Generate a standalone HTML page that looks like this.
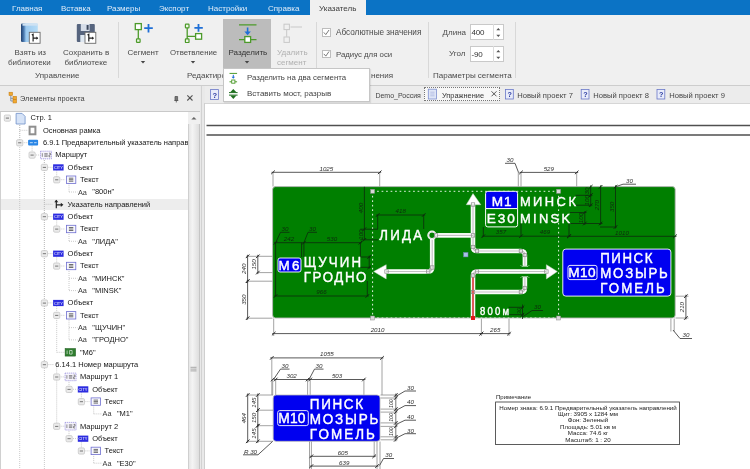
<!DOCTYPE html><html><head><meta charset="utf-8"><style>
html,body{margin:0;padding:0;}
body{width:750px;height:469px;overflow:hidden;position:relative;background:#fff;font-family:"Liberation Sans", sans-serif;}
.t{position:absolute;white-space:nowrap;}
body{will-change:transform;}
svg{position:absolute;left:0;top:0;}
</style></head><body>
<div style="position:absolute;left:0px;top:0px;width:750px;height:15.4px;background:#0b73c5"></div>
<div style="position:absolute;left:310px;top:0px;width:56px;height:16px;background:#f0f0f0"></div>
<div class="t" style="left:12.00px;top:5.43px;font-size:8.0px;line-height:8.0px;color:#dfebf8;font-weight:400;">Главная</div>
<div class="t" style="left:61.00px;top:5.43px;font-size:8.0px;line-height:8.0px;color:#dfebf8;font-weight:400;">Вставка</div>
<div class="t" style="left:107.00px;top:5.43px;font-size:8.0px;line-height:8.0px;color:#dfebf8;font-weight:400;">Размеры</div>
<div class="t" style="left:159.00px;top:5.43px;font-size:8.0px;line-height:8.0px;color:#dfebf8;font-weight:400;">Экспорт</div>
<div class="t" style="left:208.00px;top:5.43px;font-size:8.0px;line-height:8.0px;color:#dfebf8;font-weight:400;">Настройки</div>
<div class="t" style="left:268.00px;top:5.43px;font-size:8.0px;line-height:8.0px;color:#dfebf8;font-weight:400;">Справка</div>
<div class="t" style="left:319.00px;top:5.43px;font-size:8.0px;line-height:8.0px;color:#3c3c3c;font-weight:400;">Указатель</div>
<div style="position:absolute;left:0px;top:15.4px;width:750px;height:69.4px;background:#f0f0f0"></div>
<div style="position:absolute;left:0px;top:84.8px;width:750px;height:1.2px;background:#cdcdcd"></div>
<div style="position:absolute;left:118px;top:22px;width:1px;height:56px;background:#d8d8d8"></div>
<div style="position:absolute;left:315.7px;top:22px;width:1px;height:56px;background:#d8d8d8"></div>
<div style="position:absolute;left:428.3px;top:22px;width:1px;height:56px;background:#d8d8d8"></div>
<div style="position:absolute;left:515.3px;top:22px;width:1px;height:56px;background:#d8d8d8"></div>
<div style="position:absolute;left:223px;top:19px;width:48.3px;height:49px;background:#bcbcbc"></div>
<div class="t" style="left:14.50px;top:49.23px;font-size:8px;line-height:8px;color:#4a4a4a;font-weight:400;">Взять из</div>
<div class="t" style="left:8.00px;top:59.03px;font-size:8px;line-height:8px;color:#4a4a4a;font-weight:400;">библиотеки</div>
<div class="t" style="left:63.00px;top:49.23px;font-size:8px;line-height:8px;color:#4a4a4a;font-weight:400;">Сохранить в</div>
<div class="t" style="left:64.50px;top:59.03px;font-size:8px;line-height:8px;color:#4a4a4a;font-weight:400;">библиотеке</div>
<div class="t" style="left:35.00px;top:71.83px;font-size:8px;line-height:8px;color:#4a4a4a;font-weight:400;">Управление</div>
<div class="t" style="left:127.50px;top:49.23px;font-size:8px;line-height:8px;color:#4a4a4a;font-weight:400;">Сегмент</div>
<div class="t" style="left:170.00px;top:49.40px;font-size:7.8px;line-height:7.8px;color:#4a4a4a;font-weight:400;">Ответвление</div>
<div class="t" style="left:228.50px;top:49.23px;font-size:8px;line-height:8px;color:#333;font-weight:400;">Разделить</div>
<div class="t" style="left:277.00px;top:49.23px;font-size:8px;line-height:8px;color:#b0b0b0;font-weight:400;">Удалить</div>
<div class="t" style="left:277.00px;top:59.03px;font-size:8px;line-height:8px;color:#b0b0b0;font-weight:400;">сегмент</div>
<div class="t" style="left:187.00px;top:71.83px;font-size:8px;line-height:8px;color:#4a4a4a;font-weight:400;">Редактирование</div>
<div class="t" style="left:336.00px;top:28.66px;font-size:8.2px;line-height:8.2px;color:#4a4a4a;font-weight:400;">Абсолютные значения</div>
<div class="t" style="left:336.00px;top:50.90px;font-size:7.8px;line-height:7.8px;color:#4a4a4a;font-weight:400;">Радиус для оси</div>
<div class="t" style="left:371.00px;top:71.83px;font-size:8px;line-height:8px;color:#4a4a4a;font-weight:400;">нения</div>
<div class="t" style="left:442.60px;top:29.23px;font-size:8px;line-height:8px;color:#4a4a4a;font-weight:400;">Длина</div>
<div class="t" style="left:449.00px;top:50.23px;font-size:8px;line-height:8px;color:#4a4a4a;font-weight:400;">Угол</div>
<div class="t" style="left:433.00px;top:71.83px;font-size:8px;line-height:8px;color:#4a4a4a;font-weight:400;">Параметры сегмента</div>
<svg width="750" height="469" style="left:0;top:0"><path d="M140.8,61 h4.4 l-2.2,2.4z" fill="#444"/></svg>
<svg width="750" height="469" style="left:0;top:0"><path d="M190.8,61 h4.4 l-2.2,2.4z" fill="#444"/></svg>
<svg width="750" height="469" style="left:0;top:0"><path d="M244.8,61 h4.4 l-2.2,2.4z" fill="#444"/></svg>
<div style="position:absolute;left:322.2px;top:28.1px;width:8.5px;height:8.5px;background:#fff;border:1px solid #bdbdbd;box-sizing:border-box"></div>
<svg width="750" height="469"><path d="M323.8,32.4 l2,2.2 l3.2,-4.6" stroke="#6a6a6a" stroke-width="0.9" fill="none"/></svg>
<div style="position:absolute;left:322.2px;top:49.6px;width:8.5px;height:8.5px;background:#fff;border:1px solid #bdbdbd;box-sizing:border-box"></div>
<svg width="750" height="469"><path d="M323.8,53.9 l2,2.2 l3.2,-4.6" stroke="#6a6a6a" stroke-width="0.9" fill="none"/></svg>
<div style="position:absolute;left:469.8px;top:24.3px;width:34px;height:16.1px;background:#fff;border:1px solid #c9c9c9;box-sizing:border-box"></div>
<div style="position:absolute;left:492.5px;top:24.3px;width:1px;height:16.1px;background:#dcdcdc"></div>
<svg width="750" height="469"><path d="M496.3,30.3 l2,-2.3 l2,2.3z M496.3,34.8 l2,2.3 l2,-2.3z" fill="#555"/></svg>
<div style="position:absolute;left:469.8px;top:46.3px;width:34px;height:16.1px;background:#fff;border:1px solid #c9c9c9;box-sizing:border-box"></div>
<div style="position:absolute;left:492.5px;top:46.3px;width:1px;height:16.1px;background:#dcdcdc"></div>
<svg width="750" height="469"><path d="M496.3,52.3 l2,-2.3 l2,2.3z M496.3,56.8 l2,2.3 l2,-2.3z" fill="#555"/></svg>
<div class="t" style="left:471.50px;top:28.73px;font-size:8px;line-height:8px;color:#333;font-weight:400;letter-spacing:-0.2px">400</div>
<div class="t" style="left:471.50px;top:50.73px;font-size:8px;line-height:8px;color:#333;font-weight:400;letter-spacing:-0.2px">-90</div>
<svg width="750" height="469">
<defs>
<linearGradient id="bk" x1="0" x2="1"><stop offset="0" stop-color="#2c5d97"/><stop offset="0.35" stop-color="#7fb4e4"/><stop offset="1" stop-color="#a9d3f3"/></linearGradient>
<linearGradient id="fl" x1="0" x2="1"><stop offset="0" stop-color="#3d4a5d"/><stop offset="1" stop-color="#6d7b90"/></linearGradient>
</defs>
<linearGradient id="bk2" x1="0" x2="1"><stop offset="0" stop-color="#1f3f6e"/><stop offset="0.18" stop-color="#4f7fb5"/><stop offset="0.3" stop-color="#9ccaf0"/><stop offset="1" stop-color="#b6dcf6"/></linearGradient>
<rect x="21" y="23.5" width="16.8" height="18.5" rx="1.2" fill="url(#bk2)"/>
<rect x="22.5" y="23.5" width="15.3" height="2.2" fill="#cfe2f2"/>
<rect x="29.3" y="32.3" width="10.8" height="11" fill="#fff" stroke="#6a6a6a" stroke-width="0.9"/>
<path d="M31.8,35 l1.3,-0.8 v7.2 M33.1,38.2 h4.6" stroke="#222" stroke-width="1.2" fill="none"/>
<path d="M36.4,36.6 l1.8,1.6 l-1.8,1.6z" fill="#222"/>
<rect x="76.8" y="24" width="18" height="18" rx="1" fill="#56647e"/>
<rect x="80.8" y="24" width="8.8" height="7" fill="#d6dde8"/>
<rect x="86.6" y="25" width="2" height="4.8" fill="#3a465c"/>
<rect x="80.3" y="35" width="8" height="7" fill="#dfe8f2"/>
<rect x="85" y="32.3" width="10.8" height="11" fill="#fff" stroke="#6a6a6a" stroke-width="0.9"/>
<path d="M87.5,35 l1.3,-0.8 v7.2 M88.8,38.2 h4.6" stroke="#222" stroke-width="1.2" fill="none"/>
<path d="M92.1,36.6 l1.8,1.6 l-1.8,1.6z" fill="#222"/>
<!-- segment -->
<path d="M138.3,29.5 V39" stroke="#4c9a2a" stroke-width="1.3"/>
<rect x="135.3" y="23.6" width="6" height="6" fill="#fff" stroke="#4c9a2a" stroke-width="1.3"/>
<rect x="136.5" y="38.8" width="3.6" height="3.6" rx="0.6" fill="#eef6e6" stroke="#4c9a2a" stroke-width="1.2"/>
<path d="M148.5,24 v8.5 M144.2,28.2 h8.6" stroke="#1f6fd6" stroke-width="1.8"/>
<!-- branch -->
<path d="M187.2,28 V39 M187.2,36.4 H195.5" stroke="#4c9a2a" stroke-width="1.3"/>
<rect x="185.4" y="24.2" width="3.6" height="3.6" rx="0.6" fill="#eef6e6" stroke="#4c9a2a" stroke-width="1.2"/>
<rect x="185.4" y="38.9" width="3.6" height="3.6" rx="0.6" fill="#eef6e6" stroke="#4c9a2a" stroke-width="1.2"/>
<rect x="195.6" y="33.6" width="6" height="5.6" fill="#fff" stroke="#4c9a2a" stroke-width="1.3"/>
<path d="M198.5,24 v7.8 M194.4,27.9 h8.4" stroke="#1f6fd6" stroke-width="1.8"/>
<!-- split -->
<path d="M239,24.8 H256.5 M239,39.6 H256.5" stroke="#4c9a2a" stroke-width="1.3"/>
<path d="M247.6,27.5 V33" stroke="#1f6fd6" stroke-width="1.6"/>
<path d="M244.4,31.6 h6.4 l-3.2,3.6z" fill="#1f6fd6"/>
<rect x="244.8" y="36.6" width="5.8" height="5.8" fill="#fff" stroke="#4c9a2a" stroke-width="1.3"/>
<!-- delete segment disabled -->
<rect x="284" y="24.2" width="5.4" height="5.4" fill="none" stroke="#c8c8c8" stroke-width="1"/>
<path d="M290.5,27 H302 M286.7,29.8 V36.8" stroke="#c8c8c8" stroke-width="1"/>
<rect x="284" y="37" width="5.4" height="5.4" fill="none" stroke="#c8c8c8" stroke-width="1"/>
</svg>
<div style="position:absolute;left:0px;top:86px;width:200.5px;height:25.3px;background:#ececec"></div>
<div style="position:absolute;left:0px;top:111.2px;width:200.5px;height:1px;background:#c9c9c9"></div>
<div style="position:absolute;left:0px;top:112.2px;width:1.2px;height:357px;background:#d0d0d0"></div>
<div style="position:absolute;left:1.2px;top:112.2px;width:187px;height:357px;background:#fff"></div>
<div style="position:absolute;left:188px;top:112.2px;width:11.5px;height:357px;background:#f0f0f0"></div>
<div style="position:absolute;left:188.3px;top:124.3px;width:10.8px;height:345px;background:linear-gradient(90deg,#e2e2e2,#f4f4f4 40%,#dedede)"></div>
<div style="position:absolute;left:188.3px;top:124.3px;width:0.6px;height:345px;background:#cfcfcf"></div>
<div style="position:absolute;left:198.6px;top:124.3px;width:0.6px;height:345px;background:#c5c5c5"></div>
<div style="position:absolute;left:199.5px;top:86px;width:6px;height:383px;background:#e9e9e9"></div>
<div style="position:absolute;left:200.6px;top:86px;width:0.8px;height:383px;background:#d2d2d2"></div>
<div style="position:absolute;left:204.3px;top:103px;width:1px;height:366px;background:#cfcfcf"></div>
<svg width="750" height="469">
<path d="M191.3,119.6 l2.6,-2.6 l2.6,2.6z" fill="#666"/>
<path d="M190.5,367.3 h6 M190.5,369.1 h6 M190.5,370.9 h6" stroke="#8a8a8a" stroke-width="0.7"/>
<!-- header icon -->
<rect x="9" y="92.2" width="3.6" height="3.4" fill="#f0a830" stroke="#c07810" stroke-width="0.5"/>
<path d="M10.8,95.6 V101 H13.6 M10.8,98.3 H13.6" stroke="#6a7fa0" stroke-width="0.8" fill="none"/>
<rect x="13" y="96.3" width="3.6" height="3.4" fill="#f0a830" stroke="#c07810" stroke-width="0.5"/>
<rect x="13" y="99.6" width="3.6" height="3.4" fill="#f0a830" stroke="#c07810" stroke-width="0.5"/>
<!-- pin and close -->
<path d="M175,96.5 h2.6 v4 h-2.6z M174.3,100.5 h4 M176.3,100.5 v2" stroke="#555" stroke-width="0.8" fill="#777"/>
<path d="M187.3,95.3 l5.2,5.2 M192.5,95.3 l-5.2,5.2" stroke="#555" stroke-width="1.1"/>
</svg>
<div class="t" style="left:20.00px;top:95.23px;font-size:7.4px;line-height:7.4px;color:#444;font-weight:400;">Элементы проекта</div>
<div style="position:absolute;left:1.2px;top:198.5px;width:187px;height:11px;background:#ededed"></div>
<div class="t" style="left:77.95px;top:188.50px;font-size:7.3px;line-height:7.3px;color:#3a3a3a;font-weight:400;">Aa</div>
<div class="t" style="left:77.95px;top:237.82px;font-size:7.3px;line-height:7.3px;color:#3a3a3a;font-weight:400;">Aa</div>
<div class="t" style="left:77.95px;top:274.81px;font-size:7.3px;line-height:7.3px;color:#3a3a3a;font-weight:400;">Aa</div>
<div class="t" style="left:77.95px;top:287.14px;font-size:7.3px;line-height:7.3px;color:#3a3a3a;font-weight:400;">Aa</div>
<div class="t" style="left:77.95px;top:324.13px;font-size:7.3px;line-height:7.3px;color:#3a3a3a;font-weight:400;">Aa</div>
<div class="t" style="left:77.95px;top:336.46px;font-size:7.3px;line-height:7.3px;color:#3a3a3a;font-weight:400;">Aa</div>
<div class="t" style="left:102.61px;top:410.44px;font-size:7.3px;line-height:7.3px;color:#3a3a3a;font-weight:400;">Aa</div>
<div class="t" style="left:102.61px;top:459.76px;font-size:7.3px;line-height:7.3px;color:#3a3a3a;font-weight:400;">Aa</div>
<svg width="750" height="469">
<path d="M19.7,121.0 V142.7" stroke="#bdbdbd" stroke-width="0.8" stroke-dasharray="1 1"/>
<path d="M19.7,130.3 H28.1" stroke="#bdbdbd" stroke-width="0.8" stroke-dasharray="1 1"/>
<path d="M19.7,142.7 H28.1" stroke="#bdbdbd" stroke-width="0.8" stroke-dasharray="1 1"/>
<path d="M32.1,145.7 V155.0" stroke="#bdbdbd" stroke-width="0.8" stroke-dasharray="1 1"/>
<path d="M32.1,155.0 H40.5" stroke="#bdbdbd" stroke-width="0.8" stroke-dasharray="1 1"/>
<path d="M44.4,158.0 V364.6" stroke="#bdbdbd" stroke-width="0.8" stroke-dasharray="1 1"/>
<path d="M44.4,167.3 H52.8" stroke="#bdbdbd" stroke-width="0.8" stroke-dasharray="1 1"/>
<path d="M56.7,170.3 V179.7" stroke="#bdbdbd" stroke-width="0.8" stroke-dasharray="1 1"/>
<path d="M56.7,179.7 H65.1" stroke="#bdbdbd" stroke-width="0.8" stroke-dasharray="1 1"/>
<path d="M69.0,182.7 V192.0" stroke="#bdbdbd" stroke-width="0.8" stroke-dasharray="1 1"/>
<path d="M69.0,192.0 H77.5" stroke="#bdbdbd" stroke-width="0.8" stroke-dasharray="1 1"/>
<path d="M44.4,204.3 H52.8" stroke="#bdbdbd" stroke-width="0.8" stroke-dasharray="1 1"/>
<path d="M44.4,216.6 H52.8" stroke="#bdbdbd" stroke-width="0.8" stroke-dasharray="1 1"/>
<path d="M56.7,219.6 V229.0" stroke="#bdbdbd" stroke-width="0.8" stroke-dasharray="1 1"/>
<path d="M56.7,229.0 H65.1" stroke="#bdbdbd" stroke-width="0.8" stroke-dasharray="1 1"/>
<path d="M69.0,232.0 V241.3" stroke="#bdbdbd" stroke-width="0.8" stroke-dasharray="1 1"/>
<path d="M69.0,241.3 H77.5" stroke="#bdbdbd" stroke-width="0.8" stroke-dasharray="1 1"/>
<path d="M44.4,253.6 H52.8" stroke="#bdbdbd" stroke-width="0.8" stroke-dasharray="1 1"/>
<path d="M56.7,256.6 V266.0" stroke="#bdbdbd" stroke-width="0.8" stroke-dasharray="1 1"/>
<path d="M56.7,266.0 H65.1" stroke="#bdbdbd" stroke-width="0.8" stroke-dasharray="1 1"/>
<path d="M69.0,269.0 V290.6" stroke="#bdbdbd" stroke-width="0.8" stroke-dasharray="1 1"/>
<path d="M69.0,278.3 H77.5" stroke="#bdbdbd" stroke-width="0.8" stroke-dasharray="1 1"/>
<path d="M69.0,290.6 H77.5" stroke="#bdbdbd" stroke-width="0.8" stroke-dasharray="1 1"/>
<path d="M44.4,302.9 H52.8" stroke="#bdbdbd" stroke-width="0.8" stroke-dasharray="1 1"/>
<path d="M56.7,305.9 V352.3" stroke="#bdbdbd" stroke-width="0.8" stroke-dasharray="1 1"/>
<path d="M56.7,315.3 H65.1" stroke="#bdbdbd" stroke-width="0.8" stroke-dasharray="1 1"/>
<path d="M69.0,318.3 V339.9" stroke="#bdbdbd" stroke-width="0.8" stroke-dasharray="1 1"/>
<path d="M69.0,327.6 H77.5" stroke="#bdbdbd" stroke-width="0.8" stroke-dasharray="1 1"/>
<path d="M69.0,339.9 H77.5" stroke="#bdbdbd" stroke-width="0.8" stroke-dasharray="1 1"/>
<path d="M56.7,352.3 H65.1" stroke="#bdbdbd" stroke-width="0.8" stroke-dasharray="1 1"/>
<path d="M44.4,364.6 H54.3" stroke="#bdbdbd" stroke-width="0.8" stroke-dasharray="1 1"/>
<path d="M56.7,367.6 V426.2" stroke="#bdbdbd" stroke-width="0.8" stroke-dasharray="1 1"/>
<path d="M56.7,376.9 H65.1" stroke="#bdbdbd" stroke-width="0.8" stroke-dasharray="1 1"/>
<path d="M69.0,379.9 V389.3" stroke="#bdbdbd" stroke-width="0.8" stroke-dasharray="1 1"/>
<path d="M69.0,389.3 H77.5" stroke="#bdbdbd" stroke-width="0.8" stroke-dasharray="1 1"/>
<path d="M81.4,392.3 V401.6" stroke="#bdbdbd" stroke-width="0.8" stroke-dasharray="1 1"/>
<path d="M81.4,401.6 H89.8" stroke="#bdbdbd" stroke-width="0.8" stroke-dasharray="1 1"/>
<path d="M93.7,404.6 V413.9" stroke="#bdbdbd" stroke-width="0.8" stroke-dasharray="1 1"/>
<path d="M93.7,413.9 H102.1" stroke="#bdbdbd" stroke-width="0.8" stroke-dasharray="1 1"/>
<path d="M56.7,426.2 H65.1" stroke="#bdbdbd" stroke-width="0.8" stroke-dasharray="1 1"/>
<path d="M69.0,429.2 V438.6" stroke="#bdbdbd" stroke-width="0.8" stroke-dasharray="1 1"/>
<path d="M69.0,438.6 H77.5" stroke="#bdbdbd" stroke-width="0.8" stroke-dasharray="1 1"/>
<path d="M81.4,441.6 V450.9" stroke="#bdbdbd" stroke-width="0.8" stroke-dasharray="1 1"/>
<path d="M81.4,450.9 H89.8" stroke="#bdbdbd" stroke-width="0.8" stroke-dasharray="1 1"/>
<path d="M93.7,453.9 V463.2" stroke="#bdbdbd" stroke-width="0.8" stroke-dasharray="1 1"/>
<path d="M93.7,463.2 H102.1" stroke="#bdbdbd" stroke-width="0.8" stroke-dasharray="1 1"/>
<path d="M19.7,121.0 V469" stroke="#bdbdbd" stroke-width="0.8" stroke-dasharray="1 1"/>
<path d="M44.4,158.0 V469" stroke="#bdbdbd" stroke-width="0.8" stroke-dasharray="1 1"/>
<rect x="4.3" y="115.0" width="6.2" height="6.2" rx="1.2" fill="#ebebeb" stroke="#c2c2c2" stroke-width="0.7"/>
<path d="M5.8,118.1 h3.2" stroke="#555" stroke-width="0.8"/>
<path d="M16.1,113.4 h6 l3,3 v7.6 h-9z" fill="#d6e3f7" stroke="#6f8fc8" stroke-width="0.8"/>
<rect x="29.6" y="126.7" width="5.8" height="7.6" fill="#fff" stroke="#8f8f8f" stroke-width="2"/>
<rect x="16.6" y="139.7" width="6.2" height="6.2" rx="1.2" fill="#ebebeb" stroke="#c2c2c2" stroke-width="0.7"/>
<path d="M18.1,142.8 h3.2" stroke="#555" stroke-width="0.8"/>
<rect x="28.1" y="139.8" width="10" height="5.6" rx="1" fill="#2a86e6"/>
<path d="M29.8,142.7 h3 M34.1,142.7 h2.5" stroke="#fff" stroke-width="0.7"/>
<rect x="29.0" y="152.0" width="6.2" height="6.2" rx="1.2" fill="#ebebeb" stroke="#c2c2c2" stroke-width="0.7"/>
<path d="M30.5,155.1 h3.2" stroke="#555" stroke-width="0.8"/>
<rect x="40.5" y="151.2" width="11" height="7.6" fill="#f6f4fc" stroke="#8a7fd8" stroke-width="0.7" stroke-dasharray="1.2 0.8"/>
<path d="M42.3,153.2 v3.6 M44.3,153.7 h3.4 M44.3,155.0 h3.4 M44.3,156.3 h3.4 M49.0,153.2 h1.4 v1.8 h-1.4 v1.8 h1.4" stroke="#444" stroke-width="0.6" fill="none"/>
<rect x="41.3" y="164.3" width="6.2" height="6.2" rx="1.2" fill="#ebebeb" stroke="#c2c2c2" stroke-width="0.7"/>
<path d="M42.8,167.4 h3.2" stroke="#555" stroke-width="0.8"/>
<rect x="53.1" y="164.3" width="10.5" height="6.2" fill="#2c2ce0"/>
<text x="53.9" y="169.0" font-size="4.2" fill="#fff" font-family="Liberation Sans" textLength="9" lengthAdjust="spacingAndGlyphs">CITY</text>
<rect x="53.6" y="176.7" width="6.2" height="6.2" rx="1.2" fill="#ebebeb" stroke="#c2c2c2" stroke-width="0.7"/>
<path d="M55.1,179.8 h3.2" stroke="#555" stroke-width="0.8"/>
<rect x="66.4" y="176.0" width="9.4" height="7.4" fill="#f8f8fc" stroke="#6f6fd0" stroke-width="0.8"/>
<path d="M68.9,178.2 h4.4 M68.9,179.7 h4.4 M68.9,181.2 h4.4" stroke="#333" stroke-width="0.7"/>
<path d="M56.3,208.3 V200.3 M56.3,204.8 h5" stroke="#222" stroke-width="1.2" fill="none"/>
<path d="M54.3,202.3 l2,-2.6 l2,2.6z M60.8,202.7 l2.6,2.1 l-2.6,2.1z" fill="#222"/>
<rect x="41.3" y="213.6" width="6.2" height="6.2" rx="1.2" fill="#ebebeb" stroke="#c2c2c2" stroke-width="0.7"/>
<path d="M42.8,216.7 h3.2" stroke="#555" stroke-width="0.8"/>
<rect x="53.1" y="213.6" width="10.5" height="6.2" fill="#2c2ce0"/>
<text x="53.9" y="218.3" font-size="4.2" fill="#fff" font-family="Liberation Sans" textLength="9" lengthAdjust="spacingAndGlyphs">CITY</text>
<rect x="53.6" y="226.0" width="6.2" height="6.2" rx="1.2" fill="#ebebeb" stroke="#c2c2c2" stroke-width="0.7"/>
<path d="M55.1,229.1 h3.2" stroke="#555" stroke-width="0.8"/>
<rect x="66.4" y="225.3" width="9.4" height="7.4" fill="#f8f8fc" stroke="#6f6fd0" stroke-width="0.8"/>
<path d="M68.9,227.5 h4.4 M68.9,229.0 h4.4 M68.9,230.5 h4.4" stroke="#333" stroke-width="0.7"/>
<rect x="41.3" y="250.6" width="6.2" height="6.2" rx="1.2" fill="#ebebeb" stroke="#c2c2c2" stroke-width="0.7"/>
<path d="M42.8,253.7 h3.2" stroke="#555" stroke-width="0.8"/>
<rect x="53.1" y="250.6" width="10.5" height="6.2" fill="#2c2ce0"/>
<text x="53.9" y="255.3" font-size="4.2" fill="#fff" font-family="Liberation Sans" textLength="9" lengthAdjust="spacingAndGlyphs">CITY</text>
<rect x="53.6" y="263.0" width="6.2" height="6.2" rx="1.2" fill="#ebebeb" stroke="#c2c2c2" stroke-width="0.7"/>
<path d="M55.1,266.1 h3.2" stroke="#555" stroke-width="0.8"/>
<rect x="66.4" y="262.3" width="9.4" height="7.4" fill="#f8f8fc" stroke="#6f6fd0" stroke-width="0.8"/>
<path d="M68.9,264.5 h4.4 M68.9,266.0 h4.4 M68.9,267.5 h4.4" stroke="#333" stroke-width="0.7"/>
<rect x="41.3" y="299.9" width="6.2" height="6.2" rx="1.2" fill="#ebebeb" stroke="#c2c2c2" stroke-width="0.7"/>
<path d="M42.8,303.1 h3.2" stroke="#555" stroke-width="0.8"/>
<rect x="53.1" y="299.9" width="10.5" height="6.2" fill="#2c2ce0"/>
<text x="53.9" y="304.6" font-size="4.2" fill="#fff" font-family="Liberation Sans" textLength="9" lengthAdjust="spacingAndGlyphs">CITY</text>
<rect x="53.6" y="312.3" width="6.2" height="6.2" rx="1.2" fill="#ebebeb" stroke="#c2c2c2" stroke-width="0.7"/>
<path d="M55.1,315.4 h3.2" stroke="#555" stroke-width="0.8"/>
<rect x="66.4" y="311.6" width="9.4" height="7.4" fill="#f8f8fc" stroke="#6f6fd0" stroke-width="0.8"/>
<path d="M68.9,313.8 h4.4 M68.9,315.3 h4.4 M68.9,316.8 h4.4" stroke="#333" stroke-width="0.7"/>
<rect x="65.1" y="348.5" width="10.5" height="7.6" fill="#2f7d2f" stroke="#1d5a1d" stroke-width="0.5"/>
<path d="M67.1,350.5 v3.6 M69.6,350.5 v3.6 h2.5 v-3.6z" stroke="#fff" stroke-width="0.6" fill="none"/>
<rect x="41.3" y="361.6" width="6.2" height="6.2" rx="1.2" fill="#ebebeb" stroke="#c2c2c2" stroke-width="0.7"/>
<path d="M42.8,364.7 h3.2" stroke="#555" stroke-width="0.8"/>
<rect x="53.6" y="373.9" width="6.2" height="6.2" rx="1.2" fill="#ebebeb" stroke="#c2c2c2" stroke-width="0.7"/>
<path d="M55.1,377.0 h3.2" stroke="#555" stroke-width="0.8"/>
<rect x="65.1" y="373.1" width="11" height="7.6" fill="#f6f4fc" stroke="#8a7fd8" stroke-width="0.7" stroke-dasharray="1.2 0.8"/>
<path d="M66.9,375.1 v3.6 M68.9,375.6 h3.4 M68.9,376.9 h3.4 M68.9,378.2 h3.4 M73.6,375.1 h1.4 v1.8 h-1.4 v1.8 h1.4" stroke="#444" stroke-width="0.6" fill="none"/>
<rect x="66.0" y="386.3" width="6.2" height="6.2" rx="1.2" fill="#ebebeb" stroke="#c2c2c2" stroke-width="0.7"/>
<path d="M67.5,389.4 h3.2" stroke="#555" stroke-width="0.8"/>
<rect x="77.8" y="386.3" width="10.5" height="6.2" fill="#2c2ce0"/>
<text x="78.5" y="391.0" font-size="4.2" fill="#fff" font-family="Liberation Sans" textLength="9" lengthAdjust="spacingAndGlyphs">CITY</text>
<rect x="78.3" y="398.6" width="6.2" height="6.2" rx="1.2" fill="#ebebeb" stroke="#c2c2c2" stroke-width="0.7"/>
<path d="M79.8,401.7 h3.2" stroke="#555" stroke-width="0.8"/>
<rect x="91.1" y="397.9" width="9.4" height="7.4" fill="#f8f8fc" stroke="#6f6fd0" stroke-width="0.8"/>
<path d="M93.6,400.1 h4.4 M93.6,401.6 h4.4 M93.6,403.1 h4.4" stroke="#333" stroke-width="0.7"/>
<rect x="53.6" y="423.2" width="6.2" height="6.2" rx="1.2" fill="#ebebeb" stroke="#c2c2c2" stroke-width="0.7"/>
<path d="M55.1,426.4 h3.2" stroke="#555" stroke-width="0.8"/>
<rect x="65.1" y="422.4" width="11" height="7.6" fill="#f6f4fc" stroke="#8a7fd8" stroke-width="0.7" stroke-dasharray="1.2 0.8"/>
<path d="M66.9,424.4 v3.6 M68.9,424.9 h3.4 M68.9,426.2 h3.4 M68.9,427.6 h3.4 M73.6,424.4 h1.4 v1.8 h-1.4 v1.8 h1.4" stroke="#444" stroke-width="0.6" fill="none"/>
<rect x="66.0" y="435.6" width="6.2" height="6.2" rx="1.2" fill="#ebebeb" stroke="#c2c2c2" stroke-width="0.7"/>
<path d="M67.5,438.7 h3.2" stroke="#555" stroke-width="0.8"/>
<rect x="77.8" y="435.6" width="10.5" height="6.2" fill="#2c2ce0"/>
<text x="78.5" y="440.3" font-size="4.2" fill="#fff" font-family="Liberation Sans" textLength="9" lengthAdjust="spacingAndGlyphs">CITY</text>
<rect x="78.3" y="447.9" width="6.2" height="6.2" rx="1.2" fill="#ebebeb" stroke="#c2c2c2" stroke-width="0.7"/>
<path d="M79.8,451.0 h3.2" stroke="#555" stroke-width="0.8"/>
<rect x="91.1" y="447.2" width="9.4" height="7.4" fill="#f8f8fc" stroke="#6f6fd0" stroke-width="0.8"/>
<path d="M93.6,449.4 h4.4 M93.6,450.9 h4.4 M93.6,452.4 h4.4" stroke="#333" stroke-width="0.7"/>
</svg>
<div style="position:absolute;left:0;top:112px;width:188px;height:357px;overflow:hidden">
<div class="t" style="left:30.60px;top:2.45px;font-size:7.5px;line-height:7.5px;color:#161616;font-weight:400;">Стр. 1</div>
<div class="t" style="left:42.93px;top:14.78px;font-size:7.5px;line-height:7.5px;color:#161616;font-weight:400;">Основная рамка</div>
<div class="t" style="left:42.93px;top:27.11px;font-size:7.5px;line-height:7.5px;color:#161616;font-weight:400;">6.9.1 Предварительный указатель направлений</div>
<div class="t" style="left:55.26px;top:39.44px;font-size:7.5px;line-height:7.5px;color:#161616;font-weight:400;">Маршрут</div>
<div class="t" style="left:67.59px;top:51.77px;font-size:7.5px;line-height:7.5px;color:#161616;font-weight:400;">Объект</div>
<div class="t" style="left:79.92px;top:64.10px;font-size:7.5px;line-height:7.5px;color:#161616;font-weight:400;">Текст</div>
<div class="t" style="left:92.25px;top:76.43px;font-size:7.5px;line-height:7.5px;color:#161616;font-weight:400;">&quot;800н&quot;</div>
<div class="t" style="left:67.59px;top:88.76px;font-size:7.5px;line-height:7.5px;color:#161616;font-weight:400;">Указатель направлений</div>
<div class="t" style="left:67.59px;top:101.09px;font-size:7.5px;line-height:7.5px;color:#161616;font-weight:400;">Объект</div>
<div class="t" style="left:79.92px;top:113.42px;font-size:7.5px;line-height:7.5px;color:#161616;font-weight:400;">Текст</div>
<div class="t" style="left:92.25px;top:125.75px;font-size:7.5px;line-height:7.5px;color:#161616;font-weight:400;">&quot;ЛИДА&quot;</div>
<div class="t" style="left:67.59px;top:138.08px;font-size:7.5px;line-height:7.5px;color:#161616;font-weight:400;">Объект</div>
<div class="t" style="left:79.92px;top:150.41px;font-size:7.5px;line-height:7.5px;color:#161616;font-weight:400;">Текст</div>
<div class="t" style="left:92.25px;top:162.74px;font-size:7.5px;line-height:7.5px;color:#161616;font-weight:400;">&quot;МИНСК&quot;</div>
<div class="t" style="left:92.25px;top:175.07px;font-size:7.5px;line-height:7.5px;color:#161616;font-weight:400;">&quot;MINSK&quot;</div>
<div class="t" style="left:67.59px;top:187.40px;font-size:7.5px;line-height:7.5px;color:#161616;font-weight:400;">Объект</div>
<div class="t" style="left:79.92px;top:199.73px;font-size:7.5px;line-height:7.5px;color:#161616;font-weight:400;">Текст</div>
<div class="t" style="left:92.25px;top:212.06px;font-size:7.5px;line-height:7.5px;color:#161616;font-weight:400;">&quot;ЩУЧИН&quot;</div>
<div class="t" style="left:92.25px;top:224.39px;font-size:7.5px;line-height:7.5px;color:#161616;font-weight:400;">&quot;ГРОДНО&quot;</div>
<div class="t" style="left:79.92px;top:236.72px;font-size:7.5px;line-height:7.5px;color:#161616;font-weight:400;">&quot;M6&quot;</div>
<div class="t" style="left:55.29px;top:249.05px;font-size:7.5px;line-height:7.5px;color:#161616;font-weight:400;">6.14.1 Номер маршрута</div>
<div class="t" style="left:79.92px;top:261.38px;font-size:7.5px;line-height:7.5px;color:#161616;font-weight:400;">Маршрут 1</div>
<div class="t" style="left:92.25px;top:273.71px;font-size:7.5px;line-height:7.5px;color:#161616;font-weight:400;">Объект</div>
<div class="t" style="left:104.58px;top:286.04px;font-size:7.5px;line-height:7.5px;color:#161616;font-weight:400;">Текст</div>
<div class="t" style="left:116.91px;top:298.37px;font-size:7.5px;line-height:7.5px;color:#161616;font-weight:400;">&quot;M1&quot;</div>
<div class="t" style="left:79.92px;top:310.70px;font-size:7.5px;line-height:7.5px;color:#161616;font-weight:400;">Маршрут 2</div>
<div class="t" style="left:92.25px;top:323.03px;font-size:7.5px;line-height:7.5px;color:#161616;font-weight:400;">Объект</div>
<div class="t" style="left:104.58px;top:335.36px;font-size:7.5px;line-height:7.5px;color:#161616;font-weight:400;">Текст</div>
<div class="t" style="left:116.91px;top:347.69px;font-size:7.5px;line-height:7.5px;color:#161616;font-weight:400;">&quot;E30&quot;</div>
</div>
<div style="position:absolute;left:205.3px;top:86px;width:544.7px;height:17.4px;background:#ececec"></div>
<div style="position:absolute;left:205.3px;top:103px;width:544.7px;height:0.8px;background:#d6d6d6"></div>
<div style="position:absolute;left:424.4px;top:87.2px;width:75.3px;height:14.3px;background:#f7f7f7;border:1px dotted #777;box-sizing:border-box"></div>
<svg width="750" height="469">
<rect x="210.4" y="89.6" width="8.2" height="9.8" fill="#e8ecfa" stroke="#6a78c8" stroke-width="0.8"/>
<text x="212.4" y="97.6" font-size="7.5" font-weight="700" fill="#2a3aa0" font-family="Liberation Sans">?</text>
<rect x="428.3" y="89.2" width="8.2" height="9.8" fill="#dfe6f7" stroke="#7e8fcf" stroke-width="0.8"/>
<path d="M430.3,92.2 h4.2 M430.3,94 h4.2 M430.3,95.8 h4.2" stroke="#8e9ad0" stroke-width="0.5"/>
<path d="M491.5,91.3 l5,5 M496.5,91.3 l-5,5" stroke="#444" stroke-width="0.9"/>
<rect x="505.5" y="89.4" width="7.8" height="9.6" fill="#e8ecfa" stroke="#6a78c8" stroke-width="0.8"/>
<text x="507.5" y="97.4" font-size="7.2" font-weight="700" fill="#2a3aa0" font-family="Liberation Sans">?</text><rect x="581.2" y="89.4" width="7.8" height="9.6" fill="#e8ecfa" stroke="#6a78c8" stroke-width="0.8"/>
<text x="583.2" y="97.4" font-size="7.2" font-weight="700" fill="#2a3aa0" font-family="Liberation Sans">?</text><rect x="657" y="89.4" width="7.8" height="9.6" fill="#e8ecfa" stroke="#6a78c8" stroke-width="0.8"/>
<text x="659" y="97.4" font-size="7.2" font-weight="700" fill="#2a3aa0" font-family="Liberation Sans">?</text></svg>
<div class="t" style="left:375.40px;top:92.17px;font-size:7.0px;line-height:7.0px;color:#444;font-weight:400;">Demo_Россия</div>
<div class="t" style="left:442.00px;top:91.83px;font-size:7.4px;line-height:7.4px;color:#333;font-weight:400;">Упражнение</div>
<div class="t" style="left:517.30px;top:91.67px;font-size:7.6px;line-height:7.6px;color:#444;font-weight:400;">Новый проект 7</div>
<div class="t" style="left:593.30px;top:91.67px;font-size:7.6px;line-height:7.6px;color:#444;font-weight:400;">Новый проект 8</div>
<div class="t" style="left:669.30px;top:91.67px;font-size:7.6px;line-height:7.6px;color:#444;font-weight:400;">Новый проект 9</div>
<div style="position:absolute;left:205.3px;top:103.8px;width:544.7px;height:365.2px;background:#fff"></div>
<svg width="750" height="469" style="left:0;top:0">
<path d="M206.5,125.5 H750 M206.5,135 H750" stroke="#505050" stroke-width="1.3"/>
<rect x="272.6" y="186.6" width="402.6" height="131.4" rx="3" fill="#007f00" stroke="#b8b8b8" stroke-width="0.9"/>
<path d="M273,172 V186.5 M379.7,172 V186.5" stroke="#8c8c8c" stroke-width="0.8" fill="none"/>
<path d="M271.5,172.3 H381.2" stroke="#2e2e2e" stroke-width="0.8" fill="none"/>
<path d="M271.2,174.10000000000002 L274.8,170.5" stroke="#2e2e2e" stroke-width="1"/>
<path d="M377.9,174.10000000000002 L381.5,170.5" stroke="#2e2e2e" stroke-width="1"/>
<text x="326.35" y="170.70000000000002" font-size="6.2" font-style="italic" fill="#2e2e2e" text-anchor="middle" font-family="Liberation Sans">1025</text>
<path d="M518.3,172 V186.5 M521,172 V186.5 M576.7,172 V186.5" stroke="#8c8c8c" stroke-width="0.8" fill="none"/>
<path d="M519.5,172.4 H578.2" stroke="#2e2e2e" stroke-width="0.8" fill="none"/>
<path d="M519.2,174.20000000000002 L522.8,170.6" stroke="#2e2e2e" stroke-width="1"/>
<path d="M574.9000000000001,174.20000000000002 L578.5,170.6" stroke="#2e2e2e" stroke-width="1"/>
<text x="548.85" y="170.8" font-size="6.2" font-style="italic" fill="#2e2e2e" text-anchor="middle" font-family="Liberation Sans">529</text>
<path d="M518.5,172.4 L515,163.3 H505" stroke="#2e2e2e" stroke-width="0.8" fill="none"/>
<text x="510.0" y="162.10000000000002" font-size="6.2" font-style="italic" fill="#2e2e2e" text-anchor="middle" font-family="Liberation Sans">30</text>
<path d="M246,256.3 H272.5 M256.5,272.6 H272.5 M246,281.2 H272.5 M246,318.2 H272.5" stroke="#8c8c8c" stroke-width="0.8" fill="none"/>
<path d="M247.6,254.8 V282.7" stroke="#2e2e2e" stroke-width="0.8" fill="none"/>
<path d="M245.79999999999998,258.1 L249.4,254.5" stroke="#2e2e2e" stroke-width="1"/>
<path d="M245.79999999999998,283.0 L249.4,279.4" stroke="#2e2e2e" stroke-width="1"/>
<text x="246.0" y="268.75" font-size="6.2" font-style="italic" fill="#2e2e2e" text-anchor="middle" font-family="Liberation Sans" transform="rotate(-90 246.0 268.75)">240</text>
<path d="M247.6,279.7 V319.7" stroke="#2e2e2e" stroke-width="0.8" fill="none"/>
<path d="M245.79999999999998,283.0 L249.4,279.4" stroke="#2e2e2e" stroke-width="1"/>
<path d="M245.79999999999998,320.0 L249.4,316.4" stroke="#2e2e2e" stroke-width="1"/>
<text x="246.0" y="299.7" font-size="6.2" font-style="italic" fill="#2e2e2e" text-anchor="middle" font-family="Liberation Sans" transform="rotate(-90 246.0 299.7)">350</text>
<path d="M257.8,254.8 V274.1" stroke="#2e2e2e" stroke-width="0.8" fill="none"/>
<path d="M256.0,258.1 L259.6,254.5" stroke="#2e2e2e" stroke-width="1"/>
<path d="M256.0,274.40000000000003 L259.6,270.8" stroke="#2e2e2e" stroke-width="1"/>
<text x="256.2" y="264.45000000000005" font-size="6.2" font-style="italic" fill="#2e2e2e" text-anchor="middle" font-family="Liberation Sans" transform="rotate(-90 256.2 264.45000000000005)">150</text>
<path d="M273.7,318.5 V336 M481.4,318.5 V336 M509,318.5 V336" stroke="#8c8c8c" stroke-width="0.8" fill="none"/>
<path d="M272.2,333.6 H482.9" stroke="#2e2e2e" stroke-width="0.8" fill="none"/>
<path d="M271.9,335.40000000000003 L275.5,331.8" stroke="#2e2e2e" stroke-width="1"/>
<path d="M479.59999999999997,335.40000000000003 L483.2,331.8" stroke="#2e2e2e" stroke-width="1"/>
<text x="377.54999999999995" y="332.0" font-size="6.2" font-style="italic" fill="#2e2e2e" text-anchor="middle" font-family="Liberation Sans">2010</text>
<path d="M479.9,333.6 H510.5" stroke="#2e2e2e" stroke-width="0.8" fill="none"/>
<path d="M479.59999999999997,335.40000000000003 L483.2,331.8" stroke="#2e2e2e" stroke-width="1"/>
<path d="M507.2,335.40000000000003 L510.8,331.8" stroke="#2e2e2e" stroke-width="1"/>
<text x="495.2" y="332.0" font-size="6.2" font-style="italic" fill="#2e2e2e" text-anchor="middle" font-family="Liberation Sans">265</text>
<path d="M675.5,296.2 H688.5 M675.5,318 H688.5" stroke="#8c8c8c" stroke-width="0.8" fill="none"/>
<path d="M685.9,294.7 V319.5" stroke="#2e2e2e" stroke-width="0.8" fill="none"/>
<path d="M684.1,298.0 L687.6999999999999,294.4" stroke="#2e2e2e" stroke-width="1"/>
<path d="M684.1,319.8 L687.6999999999999,316.2" stroke="#2e2e2e" stroke-width="1"/>
<text x="684.3" y="307.1" font-size="6.2" font-style="italic" fill="#2e2e2e" text-anchor="middle" font-family="Liberation Sans" transform="rotate(-90 684.3 307.1)">210</text>
<path d="M670.9,318.5 V331.5 M674.2,318.5 V331.5" stroke="#8c8c8c" stroke-width="0.8" fill="none"/>
<path d="M673,330 L680,338.5 H692" stroke="#2e2e2e" stroke-width="0.8" fill="none"/>
<text x="686.0" y="337.3" font-size="6.2" font-style="italic" fill="#2e2e2e" text-anchor="middle" font-family="Liberation Sans">30</text>
<path d="M372.6,191.3 H558.6 M372.6,191.3 V318 M558.6,191.3 V318 M372.6,318 H558.6" stroke="#e0f0e0" stroke-width="1" stroke-dasharray="1.7 2.8" fill="none"/>
<path d="M275.6,242.7 V296 M301.6,242.7 V257 M303.9,242.7 V257 M360.4,242.7 V257 M367.3,281 V296" stroke="#0d2a0d" stroke-width="0.8" fill="none"/>
<path d="M274.1,242.7 H361.9" stroke="#0d2a0d" stroke-width="0.8" fill="none"/>
<path d="M273.8,244.5 L277.40000000000003,240.89999999999998" stroke="#0d2a0d" stroke-width="1"/>
<path d="M358.59999999999997,244.5 L362.2,240.89999999999998" stroke="#0d2a0d" stroke-width="1"/>
<path d="M302.09999999999997,244.5 L305.7,240.89999999999998" stroke="#0d2a0d" stroke-width="1"/>
<text x="289" y="241" font-size="6.2" font-style="italic" fill="#0d2a0d" text-anchor="middle" font-family="Liberation Sans">242</text>
<text x="332" y="241" font-size="6.2" font-style="italic" fill="#0d2a0d" text-anchor="middle" font-family="Liberation Sans">530</text>
<path d="M275.6,242.7 L280.5,232.3 H289.5" stroke="#0d2a0d" stroke-width="0.8" fill="none"/>
<text x="285.0" y="231.10000000000002" font-size="6.2" font-style="italic" fill="#0d2a0d" text-anchor="middle" font-family="Liberation Sans">30</text>
<path d="M303.9,242.7 L308,232.3 H317" stroke="#0d2a0d" stroke-width="0.8" fill="none"/>
<text x="312.5" y="231.10000000000002" font-size="6.2" font-style="italic" fill="#0d2a0d" text-anchor="middle" font-family="Liberation Sans">30</text>
<path d="M274.1,296 H368.8" stroke="#0d2a0d" stroke-width="0.8" fill="none"/>
<path d="M273.8,297.8 L277.40000000000003,294.2" stroke="#0d2a0d" stroke-width="1"/>
<path d="M365.5,297.8 L369.1,294.2" stroke="#0d2a0d" stroke-width="1"/>
<text x="321.45000000000005" y="294.4" font-size="6.2" font-style="italic" fill="#0d2a0d" text-anchor="middle" font-family="Liberation Sans">966</text>
<path d="M360.4,229.2 H378 M360.4,239.8 H378 M364.4,186.8 V240" stroke="#0d2a0d" stroke-width="0.8" fill="none"/>
<path d="M362.59999999999997,231.0 L366.2,227.39999999999998" stroke="#0d2a0d" stroke-width="1"/>
<path d="M362.59999999999997,241.60000000000002 L366.2,238.0" stroke="#0d2a0d" stroke-width="1"/>
<text x="362.6" y="208" font-size="6.2" font-style="italic" fill="#0d2a0d" text-anchor="middle" font-family="Liberation Sans" transform="rotate(-90 362.6 208)">400</text>
<text x="362.6" y="234.6" font-size="6.2" font-style="italic" fill="#0d2a0d" text-anchor="middle" font-family="Liberation Sans" transform="rotate(-90 362.6 234.6)">100</text>
<path d="M360.4,257 H371 M360.4,267.3 H371" stroke="#0d2a0d" stroke-width="0.8" fill="none"/>
<path d="M369.2,255.5 V268.8" stroke="#0d2a0d" stroke-width="0.8" fill="none"/>
<path d="M367.4,258.8 L371.0,255.2" stroke="#0d2a0d" stroke-width="1"/>
<path d="M367.4,269.1 L371.0,265.5" stroke="#0d2a0d" stroke-width="1"/>
<path d="M377.7,215 V229 M423.7,215 V229" stroke="#0d2a0d" stroke-width="0.8" fill="none"/>
<path d="M376.2,215 H425.2" stroke="#0d2a0d" stroke-width="0.8" fill="none"/>
<path d="M375.9,216.8 L379.5,213.2" stroke="#0d2a0d" stroke-width="1"/>
<path d="M421.9,216.8 L425.5,213.2" stroke="#0d2a0d" stroke-width="1"/>
<text x="400.7" y="213.4" font-size="6.2" font-style="italic" fill="#0d2a0d" text-anchor="middle" font-family="Liberation Sans">418</text>
<path d="M483.3,227 V236.2 M521,223 V236.2 M569,223 V236.2" stroke="#0d2a0d" stroke-width="0.8" fill="none"/>
<path d="M481.8,236.2 H570.5" stroke="#0d2a0d" stroke-width="0.8" fill="none"/>
<path d="M481.5,238.0 L485.1,234.39999999999998" stroke="#0d2a0d" stroke-width="1"/>
<path d="M567.2,238.0 L570.8,234.39999999999998" stroke="#0d2a0d" stroke-width="1"/>
<path d="M519.2,238.0 L522.8,234.39999999999998" stroke="#0d2a0d" stroke-width="1"/>
<text x="501" y="234.4" font-size="6.2" font-style="italic" fill="#0d2a0d" text-anchor="middle" font-family="Liberation Sans">357</text>
<text x="545" y="234.4" font-size="6.2" font-style="italic" fill="#0d2a0d" text-anchor="middle" font-family="Liberation Sans">469</text>
<path d="M567.5,236.3 H676.5" stroke="#0d2a0d" stroke-width="0.8" fill="none"/>
<path d="M567.2,238.10000000000002 L570.8,234.5" stroke="#0d2a0d" stroke-width="1"/>
<path d="M673.2,238.10000000000002 L676.8,234.5" stroke="#0d2a0d" stroke-width="1"/>
<text x="622.0" y="234.70000000000002" font-size="6.2" font-style="italic" fill="#0d2a0d" text-anchor="middle" font-family="Liberation Sans">1010</text>
<path d="M575.5,195.3 H592.5 M575.5,205.2 H592.5 M570,212.5 H586.5 M570,223.5 H602.5 M600,227 H617" stroke="#0d2a0d" stroke-width="0.8" fill="none"/>
<path d="M590.7,193.8 V206.7" stroke="#0d2a0d" stroke-width="0.8" fill="none"/>
<path d="M588.9000000000001,197.10000000000002 L592.5,193.5" stroke="#0d2a0d" stroke-width="1"/>
<path d="M588.9000000000001,207.0 L592.5,203.39999999999998" stroke="#0d2a0d" stroke-width="1"/>
<text x="589.1" y="200.25" font-size="6.2" font-style="italic" fill="#0d2a0d" text-anchor="middle" font-family="Liberation Sans" transform="rotate(-90 589.1 200.25)">100</text>
<path d="M590.7,185.3 V196.8" stroke="#0d2a0d" stroke-width="0.8" fill="none"/>
<path d="M588.9000000000001,188.60000000000002 L592.5,185.0" stroke="#0d2a0d" stroke-width="1"/>
<path d="M588.9000000000001,197.10000000000002 L592.5,193.5" stroke="#0d2a0d" stroke-width="1"/>
<text x="589.1" y="191.05" font-size="6.2" font-style="italic" fill="#0d2a0d" text-anchor="middle" font-family="Liberation Sans" transform="rotate(-90 589.1 191.05)">30</text>
<path d="M584.8,211.0 V225.0" stroke="#0d2a0d" stroke-width="0.8" fill="none"/>
<path d="M583.0,214.3 L586.5999999999999,210.7" stroke="#0d2a0d" stroke-width="1"/>
<path d="M583.0,225.3 L586.5999999999999,221.7" stroke="#0d2a0d" stroke-width="1"/>
<text x="583.1999999999999" y="218.0" font-size="6.2" font-style="italic" fill="#0d2a0d" text-anchor="middle" font-family="Liberation Sans" transform="rotate(-90 583.1999999999999 218.0)">100</text>
<path d="M600.6,185.3 V225.0" stroke="#0d2a0d" stroke-width="0.8" fill="none"/>
<path d="M598.8000000000001,188.60000000000002 L602.4,185.0" stroke="#0d2a0d" stroke-width="1"/>
<path d="M598.8000000000001,225.3 L602.4,221.7" stroke="#0d2a0d" stroke-width="1"/>
<text x="599.0" y="205.15" font-size="6.2" font-style="italic" fill="#0d2a0d" text-anchor="middle" font-family="Liberation Sans" transform="rotate(-90 599.0 205.15)">270</text>
<path d="M615.5,185.3 V228.5" stroke="#0d2a0d" stroke-width="0.8" fill="none"/>
<path d="M613.7,188.60000000000002 L617.3,185.0" stroke="#0d2a0d" stroke-width="1"/>
<path d="M613.7,228.8 L617.3,225.2" stroke="#0d2a0d" stroke-width="1"/>
<text x="613.9" y="206.9" font-size="6.2" font-style="italic" fill="#0d2a0d" text-anchor="middle" font-family="Liberation Sans" transform="rotate(-90 613.9 206.9)">350</text>
<path d="M615.5,186.8 L623,184.2 H636" stroke="#2e2e2e" stroke-width="0.8" fill="none"/>
<text x="629.5" y="183.0" font-size="6.2" font-style="italic" fill="#2e2e2e" text-anchor="middle" font-family="Liberation Sans">30</text>
<path d="M508.6,307.3 H524 M508.6,314.7 H524 M522.5,304.5 V319" stroke="#0d2a0d" stroke-width="0.8" fill="none"/>
<path d="M520.7,309.1 L524.3,305.5" stroke="#0d2a0d" stroke-width="1"/>
<path d="M520.7,316.5 L524.3,312.9" stroke="#0d2a0d" stroke-width="1"/>
<text x="520.6" y="311" font-size="5.2" font-style="italic" fill="#0d2a0d" text-anchor="middle" font-family="Liberation Sans" transform="rotate(-90 520.6 311)">30</text>
<path d="M522.5,317 L532,310.5 H543" stroke="#0d2a0d" stroke-width="0.8" fill="none"/>
<text x="537.5" y="309.3" font-size="6.2" font-style="italic" fill="#0d2a0d" text-anchor="middle" font-family="Liberation Sans">30</text>
<path d="M473,318 V275.5 Q473,271.5 477,271.5 H547" stroke="#e6f5e6" stroke-width="4.6" fill="none" stroke-linejoin="round"/>
<path d="M473,318 V275.5 Q473,271.5 477,271.5 H547" stroke="#ffffff" stroke-width="3.4" fill="none" stroke-linejoin="round"/>
<path d="M473,318 V275.5 Q473,271.5 477,271.5 H547" stroke="#c2c2c2" stroke-width="1.2" fill="none" stroke-linejoin="round"/>
<path d="M473,204 V247 Q473,251 477,251 H520.9 Q524.9,251 524.9,255 V265.8" stroke="#e6f5e6" stroke-width="4.6" fill="none" stroke-linejoin="round"/>
<path d="M473,204 V247 Q473,251 477,251 H520.9 Q524.9,251 524.9,255 V265.8" stroke="#ffffff" stroke-width="3.4" fill="none" stroke-linejoin="round"/>
<path d="M473,204 V247 Q473,251 477,251 H520.9 Q524.9,251 524.9,255 V265.8" stroke="#c2c2c2" stroke-width="1.2" fill="none" stroke-linejoin="round"/>
<path d="M524.9,277.2 V288 Q524.9,292 520.9,292 H473" stroke="#e6f5e6" stroke-width="4.6" fill="none" stroke-linejoin="round"/>
<path d="M524.9,277.2 V288 Q524.9,292 520.9,292 H473" stroke="#ffffff" stroke-width="3.4" fill="none" stroke-linejoin="round"/>
<path d="M524.9,277.2 V288 Q524.9,292 520.9,292 H473" stroke="#c2c2c2" stroke-width="1.2" fill="none" stroke-linejoin="round"/>
<path d="M473,235.4 H432.2" stroke="#e6f5e6" stroke-width="4.6" fill="none" stroke-linejoin="round"/>
<path d="M473,235.4 H432.2" stroke="#ffffff" stroke-width="3.4" fill="none" stroke-linejoin="round"/>
<path d="M473,235.4 H432.2" stroke="#c2c2c2" stroke-width="1.2" fill="none" stroke-linejoin="round"/>
<path d="M432.2,235.4 V267.5 Q432.2,271.5 428.2,271.5 H385" stroke="#e6f5e6" stroke-width="4.6" fill="none" stroke-linejoin="round"/>
<path d="M432.2,235.4 V267.5 Q432.2,271.5 428.2,271.5 H385" stroke="#ffffff" stroke-width="3.4" fill="none" stroke-linejoin="round"/>
<path d="M432.2,235.4 V267.5 Q432.2,271.5 428.2,271.5 H385" stroke="#c2c2c2" stroke-width="1.2" fill="none" stroke-linejoin="round"/>
<path d="M520.6,265.2 l1.2,1.2 h6.2 l1.2,-1.2 M520.6,277.8 l1.2,-1.2 h6.2 l1.2,1.2" stroke="#d6e6d6" stroke-width="0.7" fill="none"/>
<path d="M373.7,271.5 L386.2,264.7 L386.2,278.9z M557.3,271.5 L546.4,264.7 L546.4,278.9z M473,193.6 L466.3,204.7 L480.8,204.7z" fill="#fff" stroke="#c9d9c9" stroke-width="0.5"/>
<circle cx="432" cy="235.3" r="3.7" fill="#007f00" stroke="#fff" stroke-width="2"/>
<circle cx="432" cy="235.3" r="3.7" fill="none" stroke="#c8c8c8" stroke-width="0.6"/>
<path d="M473,277 V318" stroke="#e01818" stroke-width="1.3"/>
<rect x="471" y="316" width="4" height="4" fill="#e01818"/>
<rect x="471.3" y="202.8" width="3.4" height="3.4" fill="none" stroke="#8c8c8c" stroke-width="0.7"/>
<rect x="471.3" y="233.70000000000002" width="3.4" height="3.4" fill="none" stroke="#8c8c8c" stroke-width="0.7"/>
<rect x="471.3" y="245.3" width="3.4" height="3.4" fill="none" stroke="#8c8c8c" stroke-width="0.7"/>
<rect x="475.3" y="249.3" width="3.4" height="3.4" fill="none" stroke="#8c8c8c" stroke-width="0.7"/>
<rect x="519.1999999999999" y="249.3" width="3.4" height="3.4" fill="none" stroke="#8c8c8c" stroke-width="0.7"/>
<rect x="523.1999999999999" y="253.3" width="3.4" height="3.4" fill="none" stroke="#8c8c8c" stroke-width="0.7"/>
<rect x="523.1999999999999" y="286.3" width="3.4" height="3.4" fill="none" stroke="#8c8c8c" stroke-width="0.7"/>
<rect x="519.1999999999999" y="290.3" width="3.4" height="3.4" fill="none" stroke="#8c8c8c" stroke-width="0.7"/>
<rect x="471.3" y="290.3" width="3.4" height="3.4" fill="none" stroke="#8c8c8c" stroke-width="0.7"/>
<rect x="475.3" y="269.8" width="3.4" height="3.4" fill="none" stroke="#8c8c8c" stroke-width="0.7"/>
<rect x="471.3" y="273.8" width="3.4" height="3.4" fill="none" stroke="#8c8c8c" stroke-width="0.7"/>
<rect x="544.6999999999999" y="269.8" width="3.4" height="3.4" fill="none" stroke="#8c8c8c" stroke-width="0.7"/>
<rect x="426.5" y="269.8" width="3.4" height="3.4" fill="none" stroke="#8c8c8c" stroke-width="0.7"/>
<rect x="430.5" y="265.8" width="3.4" height="3.4" fill="none" stroke="#8c8c8c" stroke-width="0.7"/>
<rect x="384.8" y="269.8" width="3.4" height="3.4" fill="none" stroke="#8c8c8c" stroke-width="0.7"/>
<rect x="434.3" y="233.70000000000002" width="3.4" height="3.4" fill="none" stroke="#8c8c8c" stroke-width="0.7"/>
<rect x="370.6" y="189.3" width="4" height="4" fill="#d8d8d8" stroke="#8a8a8a" stroke-width="0.5"/>
<rect x="556.6" y="189.3" width="4" height="4" fill="#d8d8d8" stroke="#8a8a8a" stroke-width="0.5"/>
<rect x="370.6" y="316" width="4" height="4" fill="#d8d8d8" stroke="#8a8a8a" stroke-width="0.5"/>
<rect x="556.6" y="316" width="4" height="4" fill="#d8d8d8" stroke="#8a8a8a" stroke-width="0.5"/>
<rect x="463.6" y="252.5" width="4.4" height="4.4" fill="#a8c0e8" stroke="#7080b0" stroke-width="0.5"/>
<path d="M485.6,208.6 V193.5 Q485.6,191.3 487.8,191.3 H515.4 Q517.6,191.3 517.6,193.5 V208.6z" fill="#0000f0" stroke="#fff" stroke-width="1"/>
<path d="M485.6,208.6 V224.7 Q485.6,226.9 487.8,226.9 H515.4 Q517.6,226.9 517.6,224.7 V208.6z" fill="#007f00" stroke="#fff" stroke-width="1"/>
<rect x="278" y="258" width="23" height="14" rx="2" fill="#0000f0" stroke="#fff" stroke-width="0.9"/>
<rect x="562.8" y="249.1" width="108.1" height="47" rx="3" fill="#0000f0" stroke="#fff" stroke-width="0.9"/>
<rect x="568" y="265.4" width="29" height="14.2" rx="2" fill="none" stroke="#fff" stroke-width="0.9"/>
<text transform="translate(303.65,267.2) scale(0.95,1)" x="0" y="0" font-size="14" fill="#fff" stroke="#fff" stroke-width="0.42" font-family="Liberation Sans" textLength="60.57" lengthAdjust="spacing">ЩУЧИН</text>
<text transform="translate(303.65,281.6) scale(0.95,1)" x="0" y="0" font-size="14" fill="#fff" stroke="#fff" stroke-width="0.42" font-family="Liberation Sans" textLength="66.12" lengthAdjust="spacing">ГРОДНО</text>
<text transform="translate(379.22,239.8) scale(0.95,1)" x="0" y="0" font-size="14" fill="#fff" stroke="#fff" stroke-width="0.42" font-family="Liberation Sans" textLength="45.1" lengthAdjust="spacing">ЛИДА</text>
<text transform="translate(491.84,205.6) scale(1.0,1)" x="0" y="0" font-size="13.6" fill="#fff" stroke="#fff" stroke-width="0.42" font-family="Liberation Sans" textLength="19.73" lengthAdjust="spacing">M1</text>
<text transform="translate(486.84,222.7) scale(1.0,1)" x="0" y="0" font-size="13.6" fill="#fff" stroke="#fff" stroke-width="0.42" font-family="Liberation Sans" textLength="28.0" lengthAdjust="spacing">E30</text>
<text transform="translate(519.88,205.6) scale(0.95,1)" x="0" y="0" font-size="13.6" fill="#fff" stroke="#fff" stroke-width="0.42" font-family="Liberation Sans" textLength="58.98" lengthAdjust="spacing">МИНСК</text>
<text transform="translate(519.88,222.7) scale(0.95,1)" x="0" y="0" font-size="13.6" fill="#fff" stroke="#fff" stroke-width="0.42" font-family="Liberation Sans" textLength="52.92" lengthAdjust="spacing">MINSK</text>
<text transform="translate(278.44,269.7) scale(1.0,1)" x="0" y="0" font-size="13.4" fill="#fff" stroke="#fff" stroke-width="0.42" font-family="Liberation Sans" textLength="20.92" lengthAdjust="spacing">M6</text>
<text transform="translate(600.25,263.0) scale(0.95,1)" x="0" y="0" font-size="14" fill="#fff" stroke="#fff" stroke-width="0.42" font-family="Liberation Sans" textLength="55.01" lengthAdjust="spacing">ПИНСК</text>
<text transform="translate(600.25,277.6) scale(0.95,1)" x="0" y="0" font-size="14" fill="#fff" stroke="#fff" stroke-width="0.42" font-family="Liberation Sans" textLength="71.14" lengthAdjust="spacing">МОЗЫРЬ</text>
<text transform="translate(600.25,292.8) scale(0.95,1)" x="0" y="0" font-size="14" fill="#fff" stroke="#fff" stroke-width="0.42" font-family="Liberation Sans" textLength="67.82" lengthAdjust="spacing">ГОМЕЛЬ</text>
<text transform="translate(568.24,277.4) scale(1.0,1)" x="0" y="0" font-size="13.6" fill="#fff" stroke="#fff" stroke-width="0.42" font-family="Liberation Sans" textLength="27.31" lengthAdjust="spacing">M10</text>
<text transform="translate(480.05,314.7) scale(0.9,1)" x="0" y="0" font-size="10.6" fill="#fff" stroke="#fff" stroke-width="0.42" font-family="Liberation Sans" textLength="32.18" lengthAdjust="spacing">800м</text>
<path d="M271.8,357.9 V395 M382,357.9 V395" stroke="#8c8c8c" stroke-width="0.8" fill="none"/>
<path d="M270.3,357.9 H383.5" stroke="#2e2e2e" stroke-width="0.8" fill="none"/>
<path d="M270.0,359.7 L273.6,356.09999999999997" stroke="#2e2e2e" stroke-width="1"/>
<path d="M380.2,359.7 L383.8,356.09999999999997" stroke="#2e2e2e" stroke-width="1"/>
<text x="326.9" y="356.29999999999995" font-size="6.2" font-style="italic" fill="#2e2e2e" text-anchor="middle" font-family="Liberation Sans">1055</text>
<path d="M272.7,379.5 V395 M275.7,379.5 V395 M307.6,379.5 V395 M310.2,379.5 V395 M363.9,379.5 V395" stroke="#8c8c8c" stroke-width="0.8" fill="none"/>
<path d="M274.2,379.5 H309.1" stroke="#2e2e2e" stroke-width="0.8" fill="none"/>
<path d="M273.9,381.3 L277.5,377.7" stroke="#2e2e2e" stroke-width="1"/>
<path d="M305.8,381.3 L309.40000000000003,377.7" stroke="#2e2e2e" stroke-width="1"/>
<text x="291.65" y="377.9" font-size="6.2" font-style="italic" fill="#2e2e2e" text-anchor="middle" font-family="Liberation Sans">302</text>
<path d="M308.7,379.5 H365.4" stroke="#2e2e2e" stroke-width="0.8" fill="none"/>
<path d="M308.4,381.3 L312.0,377.7" stroke="#2e2e2e" stroke-width="1"/>
<path d="M362.09999999999997,381.3 L365.7,377.7" stroke="#2e2e2e" stroke-width="1"/>
<text x="337.04999999999995" y="377.9" font-size="6.2" font-style="italic" fill="#2e2e2e" text-anchor="middle" font-family="Liberation Sans">503</text>
<path d="M270.9,381.3 L274.5,377.7" stroke="#2e2e2e" stroke-width="1"/>
<path d="M273.5,379.5 L280.5,369.1 H289.5" stroke="#2e2e2e" stroke-width="0.8" fill="none"/>
<text x="285.0" y="367.90000000000003" font-size="6.2" font-style="italic" fill="#2e2e2e" text-anchor="middle" font-family="Liberation Sans">30</text>
<path d="M309,379.5 L314.5,369.1 H323.5" stroke="#2e2e2e" stroke-width="0.8" fill="none"/>
<text x="319.0" y="367.90000000000003" font-size="6.2" font-style="italic" fill="#2e2e2e" text-anchor="middle" font-family="Liberation Sans">30</text>
<rect x="273.2" y="395" width="106.8" height="46.3" rx="3" fill="#0000f0" stroke="#b8b8b8" stroke-width="0.8"/>
<rect x="277.7" y="410.6" width="30.6" height="15" rx="2" fill="none" stroke="#fff" stroke-width="0.9"/>
<text transform="translate(278.22,422.8) scale(1.0,1)" x="0" y="0" font-size="13.8" fill="#fff" stroke="#fff" stroke-width="0.42" font-family="Liberation Sans" textLength="27.25" lengthAdjust="spacing">M10</text>
<text transform="translate(309.84,408.9) scale(0.95,1)" x="0" y="0" font-size="14.2" fill="#fff" stroke="#fff" stroke-width="0.42" font-family="Liberation Sans" textLength="55.95" lengthAdjust="spacing">ПИНСК</text>
<text transform="translate(309.84,424.1) scale(0.95,1)" x="0" y="0" font-size="14.2" fill="#fff" stroke="#fff" stroke-width="0.42" font-family="Liberation Sans" textLength="72.07" lengthAdjust="spacing">МОЗЫРЬ</text>
<text transform="translate(309.84,438.6) scale(0.95,1)" x="0" y="0" font-size="14.2" fill="#fff" stroke="#fff" stroke-width="0.42" font-family="Liberation Sans" textLength="68.48" lengthAdjust="spacing">ГОМЕЛЬ</text>
<path d="M246.5,395 H273 M257,410.2 H273 M257,425.7 H273 M246.5,441.3 H273" stroke="#8c8c8c" stroke-width="0.8" fill="none"/>
<path d="M247.7,393.5 V442.8" stroke="#2e2e2e" stroke-width="0.8" fill="none"/>
<path d="M245.89999999999998,396.8 L249.5,393.2" stroke="#2e2e2e" stroke-width="1"/>
<path d="M245.89999999999998,443.1 L249.5,439.5" stroke="#2e2e2e" stroke-width="1"/>
<text x="246.1" y="418.15" font-size="6.2" font-style="italic" fill="#2e2e2e" text-anchor="middle" font-family="Liberation Sans" transform="rotate(-90 246.1 418.15)">464</text>
<path d="M257.8,393.5 V411.7" stroke="#2e2e2e" stroke-width="0.8" fill="none"/>
<path d="M256.0,396.8 L259.6,393.2" stroke="#2e2e2e" stroke-width="1"/>
<path d="M256.0,412.0 L259.6,408.4" stroke="#2e2e2e" stroke-width="1"/>
<text x="256.2" y="402.6" font-size="6.2" font-style="italic" fill="#2e2e2e" text-anchor="middle" font-family="Liberation Sans" transform="rotate(-90 256.2 402.6)">145</text>
<path d="M257.8,408.7 V427.2" stroke="#2e2e2e" stroke-width="0.8" fill="none"/>
<path d="M256.0,412.0 L259.6,408.4" stroke="#2e2e2e" stroke-width="1"/>
<path d="M256.0,427.5 L259.6,423.9" stroke="#2e2e2e" stroke-width="1"/>
<text x="256.2" y="417.95" font-size="6.2" font-style="italic" fill="#2e2e2e" text-anchor="middle" font-family="Liberation Sans" transform="rotate(-90 256.2 417.95)">150</text>
<path d="M257.8,424.2 V442.8" stroke="#2e2e2e" stroke-width="0.8" fill="none"/>
<path d="M256.0,427.5 L259.6,423.9" stroke="#2e2e2e" stroke-width="1"/>
<path d="M256.0,443.1 L259.6,439.5" stroke="#2e2e2e" stroke-width="1"/>
<text x="256.2" y="433.5" font-size="6.2" font-style="italic" fill="#2e2e2e" text-anchor="middle" font-family="Liberation Sans" transform="rotate(-90 256.2 433.5)">145</text>
<path d="M272.5,441.5 L258,454.8 H243" stroke="#2e2e2e" stroke-width="0.8" fill="none"/>
<text x="250.5" y="453.6" font-size="6.2" font-style="italic" fill="#2e2e2e" text-anchor="middle" font-family="Liberation Sans">R 30</text>
<path d="M380.5,395 H397.5 M380.5,398 H397.5 M380.5,409.1 H397.5 M380.5,412.1 H397.5 M380.5,422.9 H397.5 M380.5,426.4 H397.5 M380.5,436.8 H397.5 M380.5,439.8 H397.5" stroke="#8c8c8c" stroke-width="0.8" fill="none"/>
<path d="M395.8,393.5 V441.3" stroke="#505050" stroke-width="0.8" fill="none"/>
<path d="M394.0,396.8 L397.6,393.2" stroke="#2e2e2e" stroke-width="1"/>
<path d="M394.0,399.8 L397.6,396.2" stroke="#2e2e2e" stroke-width="1"/>
<path d="M394.0,410.90000000000003 L397.6,407.3" stroke="#2e2e2e" stroke-width="1"/>
<path d="M394.0,413.90000000000003 L397.6,410.3" stroke="#2e2e2e" stroke-width="1"/>
<path d="M394.0,424.7 L397.6,421.09999999999997" stroke="#2e2e2e" stroke-width="1"/>
<path d="M394.0,428.2 L397.6,424.59999999999997" stroke="#2e2e2e" stroke-width="1"/>
<path d="M394.0,438.6 L397.6,435.0" stroke="#2e2e2e" stroke-width="1"/>
<path d="M394.0,441.6 L397.6,438.0" stroke="#2e2e2e" stroke-width="1"/>
<text x="393.3" y="403.6" font-size="5.2" font-style="italic" fill="#2e2e2e" text-anchor="middle" font-family="Liberation Sans" transform="rotate(-90 393.3 403.6)">100</text>
<text x="393.3" y="417.5" font-size="5.2" font-style="italic" fill="#2e2e2e" text-anchor="middle" font-family="Liberation Sans" transform="rotate(-90 393.3 417.5)">100</text>
<text x="393.3" y="431.6" font-size="5.2" font-style="italic" fill="#2e2e2e" text-anchor="middle" font-family="Liberation Sans" transform="rotate(-90 393.3 431.6)">100</text>
<path d="M395.8,396.5 L405,391 H416" stroke="#2e2e2e" stroke-width="0.8" fill="none"/>
<text x="410.5" y="389.8" font-size="6.2" font-style="italic" fill="#2e2e2e" text-anchor="middle" font-family="Liberation Sans">30</text>
<path d="M395.8,410.6 L405,405.6 H416" stroke="#2e2e2e" stroke-width="0.8" fill="none"/>
<text x="410.5" y="404.40000000000003" font-size="6.2" font-style="italic" fill="#2e2e2e" text-anchor="middle" font-family="Liberation Sans">40</text>
<path d="M395.8,424.6 L405,420.2 H416" stroke="#2e2e2e" stroke-width="0.8" fill="none"/>
<text x="410.5" y="419.0" font-size="6.2" font-style="italic" fill="#2e2e2e" text-anchor="middle" font-family="Liberation Sans">40</text>
<path d="M395.8,438.3 L405,433.7 H416" stroke="#2e2e2e" stroke-width="0.8" fill="none"/>
<text x="410.5" y="432.5" font-size="6.2" font-style="italic" fill="#2e2e2e" text-anchor="middle" font-family="Liberation Sans">30</text>
<path d="M309.5,441.5 V469 M311.4,441.5 V469 M374.2,441.5 V457.5 M377,441.5 V469 M380,441.5 V469" stroke="#8c8c8c" stroke-width="0.8" fill="none"/>
<path d="M309.9,456.3 H375.7" stroke="#2e2e2e" stroke-width="0.8" fill="none"/>
<path d="M309.59999999999997,458.1 L313.2,454.5" stroke="#2e2e2e" stroke-width="1"/>
<path d="M372.4,458.1 L376.0,454.5" stroke="#2e2e2e" stroke-width="1"/>
<text x="342.79999999999995" y="454.7" font-size="6.2" font-style="italic" fill="#2e2e2e" text-anchor="middle" font-family="Liberation Sans">605</text>
<path d="M309.9,466.1 H378.5" stroke="#2e2e2e" stroke-width="0.8" fill="none"/>
<path d="M309.59999999999997,467.90000000000003 L313.2,464.3" stroke="#2e2e2e" stroke-width="1"/>
<path d="M375.2,467.90000000000003 L378.8,464.3" stroke="#2e2e2e" stroke-width="1"/>
<text x="344.2" y="464.5" font-size="6.2" font-style="italic" fill="#2e2e2e" text-anchor="middle" font-family="Liberation Sans">639</text>
<path d="M379.5,465.5 L383.5,458.5 H394" stroke="#2e2e2e" stroke-width="0.8" fill="none"/>
<text x="388.75" y="457.3" font-size="6.2" font-style="italic" fill="#2e2e2e" text-anchor="middle" font-family="Liberation Sans">30</text>
<text x="496" y="399" font-size="6" fill="#222" font-family="Liberation Sans" textLength="35" lengthAdjust="spacingAndGlyphs">Примечание</text>
<rect x="495.6" y="402" width="183.8" height="42.6" fill="none" stroke="#333" stroke-width="0.8"/>
<text x="588" y="409.50" font-size="6.2" fill="#222" text-anchor="middle" font-family="Liberation Sans">Номер знака: 6.9.1 Предварительный указатель направлений</text>
<text x="588" y="415.95" font-size="6.2" fill="#222" text-anchor="middle" font-family="Liberation Sans">Щит: 3905 x 1284 мм</text>
<text x="588" y="422.40" font-size="6.2" fill="#222" text-anchor="middle" font-family="Liberation Sans">Фон: Зеленый</text>
<text x="588" y="428.85" font-size="6.2" fill="#222" text-anchor="middle" font-family="Liberation Sans">Площадь: 5.01 кв м</text>
<text x="588" y="435.30" font-size="6.2" fill="#222" text-anchor="middle" font-family="Liberation Sans">Масса: 74.6 кг</text>
<text x="588" y="441.75" font-size="6.2" fill="#222" text-anchor="middle" font-family="Liberation Sans">Масштаб: 1 : 20</text>
</svg>
<div style="position:absolute;left:223px;top:68.3px;width:147px;height:33.8px;background:#fff;border:1px solid #c6c6c6;box-sizing:border-box;box-shadow:1px 1px 1px rgba(0,0,0,0.08)"></div>
<svg width="750" height="469">
<path d="M229.5,73.4 h7.6 M229.5,81.8 h7.6" stroke="#4c9a2a" stroke-width="1"/>
<path d="M233.3,74.8 v3" stroke="#1f6fd6" stroke-width="1"/>
<path d="M231.6,76.8 h3.4 l-1.7,2z" fill="#1f6fd6"/>
<rect x="231.7" y="80" width="3.2" height="3.2" fill="#fff" stroke="#4c9a2a" stroke-width="0.9"/>
<path d="M230.2,92.3 l3.1,-3.3 l3.1,3.3z M230.2,95.4 l3.1,3.5 l3.1,-3.5z" fill="#1f6f1f"/>
<path d="M229,92.6 h8.6 M229,95.1 h8.6" stroke="#1f6f1f" stroke-width="1"/>
</svg>
<div class="t" style="left:247.00px;top:73.67px;font-size:7.83px;line-height:7.83px;color:#444;font-weight:400;">Разделить на два сегмента</div>
<div class="t" style="left:247.00px;top:89.73px;font-size:8px;line-height:8px;color:#444;font-weight:400;">Вставить мост, разрыв</div>
</body></html>
